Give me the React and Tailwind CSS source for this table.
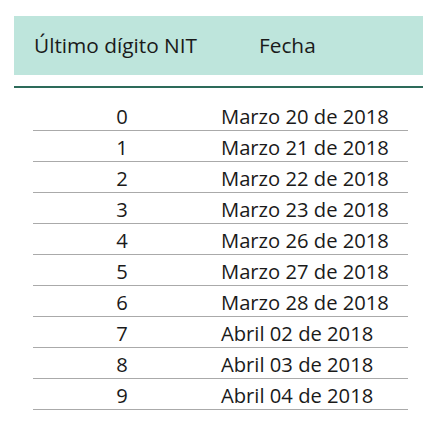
const rows = [
  ["0", "Marzo 20 de 2018"],
  ["1", "Marzo 21 de 2018"],
  ["2", "Marzo 22 de 2018"],
  ["3", "Marzo 23 de 2018"],
  ["4", "Marzo 26 de 2018"],
  ["5", "Marzo 27 de 2018"],
  ["6", "Marzo 28 de 2018"],
  ["7", "Abril 02 de 2018"],
  ["8", "Abril 03 de 2018"],
  ["9", "Abril 04 de 2018"],
];

const App = () => {
  return (
    <div className="w-[438px] h-[428px] bg-white text-[#1a1a1a] font-['Open_Sans',sans-serif]">
      <div className="pt-4 ml-[14px] w-[409px]">
        <div className="flex items-center h-[59px] bg-[#bee5dc] text-[20.8px]">
          <div className="pl-5 w-[245px]">Último dígito NIT</div>
          <div>Fecha</div>
        </div>
        <div className="mt-[11px] border-t-2 border-[#2d6b5a]"></div>
      </div>

      <div className="mt-3 ml-[33px] w-[375px]">
        {rows.map(([d, f]) => (
          <div key={d} className="flex items-center h-[31px] pt-[3px] border-b border-[#aaa] text-[20.2px]">
            <div className="w-[178px] text-center">{d}</div>
            <div className="pl-[10px]">{f}</div>
          </div>
        ))}
      </div>
    </div>
  );
};

export default App;
